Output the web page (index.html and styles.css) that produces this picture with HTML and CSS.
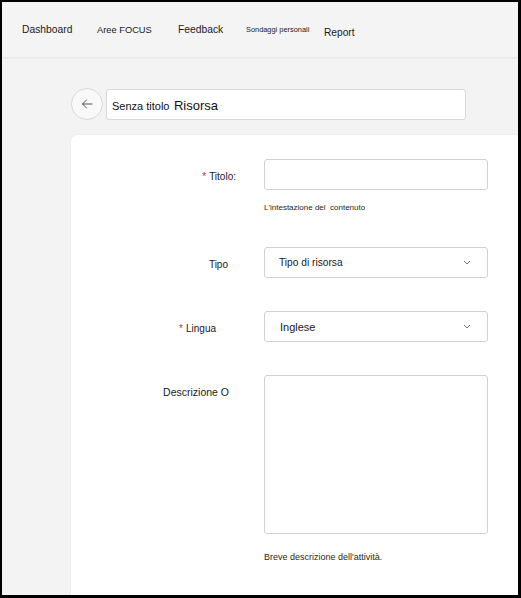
FILE: index.html
```html
<!DOCTYPE html>
<html lang="it">
<head>
<meta charset="utf-8">
<title>Senza titolo Risorsa</title>
<link rel="stylesheet" href="styles.css">
</head>
<body>
<div class="frame">
  <header class="topbar">
    <nav class="nav">
      <a class="nav-item nav-dashboard">Dashboard</a>
      <a class="nav-item nav-aree">Aree FOCUS</a>
      <a class="nav-item nav-feedback">Feedback</a>
      <a class="nav-item nav-sondaggi">Sondaggi personali</a>
      <a class="nav-item nav-report">Report</a>
    </nav>
  </header>
  <main class="page">
    <div class="title-row">
      <button class="back-btn" type="button" aria-label="Indietro">
        <svg width="12" height="10" viewBox="0 0 12 10" aria-hidden="true">
          <path d="M11 5H1.5M5.5 1L1.5 5L5.5 9" fill="none" stroke="#555" stroke-width="1" stroke-linecap="round" stroke-linejoin="round"/>
        </svg>
      </button>
      <div class="title-box"><span class="title-small">Senza titolo</span> <span class="title-big">Risorsa</span></div>
    </div>
    <section class="card">
      <div class="field">
        <label class="label label-titolo"><span class="req">*</span>Titolo:</label>
        <div class="control">
          <div class="input"></div>
          <div class="help help-titolo">L'intestazione del&nbsp; contenuto</div>
        </div>
      </div>
      <div class="field field-tipo">
        <label class="label label-tipo">Tipo</label>
        <div class="control">
          <div class="input select"><span class="select-text">Tipo di risorsa</span>
            <svg class="chev" width="8" height="5" viewBox="0 0 8 5" aria-hidden="true"><path d="M1 1l3 3 3-3" fill="none" stroke="#777" stroke-width="1"/></svg>
          </div>
        </div>
      </div>
      <div class="field field-lingua">
        <label class="label label-lingua"><span class="req">*</span>Lingua</label>
        <div class="control">
          <div class="input select"><span class="select-text select-text-lg">Inglese</span>
            <svg class="chev" width="8" height="5" viewBox="0 0 8 5" aria-hidden="true"><path d="M1 1l3 3 3-3" fill="none" stroke="#777" stroke-width="1"/></svg>
          </div>
        </div>
      </div>
      <div class="field field-descr">
        <label class="label label-descr">Descrizione O</label>
        <div class="control">
          <div class="input textarea"></div>
          <div class="help help-descr">Breve descrizione dell'attività.</div>
        </div>
      </div>
    </section>
  </main>
</div>
</body>
</html>
```
FILE: styles.css
```css
* { box-sizing: border-box; }
html, body { margin: 0; padding: 0; background: #000; }
body { font-family: "Liberation Sans", Arial, sans-serif; color: #1f1f1f; }

.frame {
  width: 521px;
  height: 598px;
  border-style: solid;
  border-color: #000;
  border-width: 2px 3px 3px 2px;
  background: #f4f4f4;
  overflow: hidden;
  display: flex;
  flex-direction: column;
}

.topbar {
  height: 55px;
  flex: none;
  background: #f4f4f4;
  box-shadow: 0 1px 2px rgba(0,0,0,0.07);
  position: relative;
  z-index: 1;
}
.nav {
  display: flex;
  align-items: flex-start;
  padding-left: 20px;
  height: 100%;
}
.nav-item { color: #1a1a1a; white-space: nowrap; }
.nav-dashboard { width: 75px; font-size: 10.3px; padding-top: 22px; }
.nav-aree { width: 81px; font-size: 9.3px; padding-top: 23px; }
.nav-feedback { width: 68px; font-size: 10.3px; padding-top: 22px; }
.nav-sondaggi { width: 78px; font-size: 7.4px; padding-top: 23px; }
.nav-report { font-size: 10.2px; padding-top: 25px; }

.page {
  flex: 1;
  padding: 31px 0 0 69px;
  background: #f3f3f3;
}

.title-row {
  display: flex;
  align-items: center;
  gap: 3px;
}
.back-btn {
  width: 32px;
  height: 32px;
  border-radius: 50%;
  border: 1px solid #d8d8d8;
  background: #f9f9f9;
  padding: 0;
  display: flex;
  align-items: center;
  justify-content: center;
}
.title-box {
  width: 360px;
  height: 31px;
  background: #fff;
  border: 1px solid #d9d9d9;
  border-radius: 3px;
  padding: 6px 0 0 5px;
  white-space: nowrap;
  color: #111;
}
.title-small { font-size: 11px; }
.title-big { font-size: 13px; }

.card {
  margin-top: 15px;
  width: 480px;
  height: 520px;
  background: #fff;
  border-radius: 6px 0 0 0;
  box-shadow: 0 0 2px rgba(0,0,0,0.08);
  padding-top: 24px;
}

.field {
  display: grid;
  grid-template-columns: 165px 224px;
  column-gap: 28px;
  align-items: start;
}
.field-tipo { margin-top: 34px; }
.field-lingua { margin-top: 33px; }
.field-descr { margin-top: 33px; }

.label {
  font-size: 10px;
  height: 31px;
  line-height: 31px;
  padding-top: 2px;
  text-align: right;
  color: #1a1a1a;
  white-space: nowrap;
}
.label-tipo { padding-right: 8px; }
.label-lingua { padding-right: 20px; }
.label-descr { font-size: 10.5px; padding-right: 7px; }
.req { color: #c4314b; margin-right: 3px; }

.input {
  height: 31px;
  border: 1px solid #d1d1d1;
  border-radius: 3px;
  background: #fff;
}
.select {
  display: flex;
  align-items: center;
  justify-content: space-between;
  padding: 0 16px 0 14px;
}
.select-text { font-size: 10.2px; color: #1a1a1a; }
.select-text-lg { font-size: 11px; padding-left: 1px; }
.chev { flex: none; }
.textarea { height: 159px; }

.help { color: #2a1f14; white-space: nowrap; }
.help-titolo { font-size: 8px; line-height: 10px; margin-top: 13px; }
.help-descr { font-size: 9px; line-height: 11px; margin-top: 18px; }
```
